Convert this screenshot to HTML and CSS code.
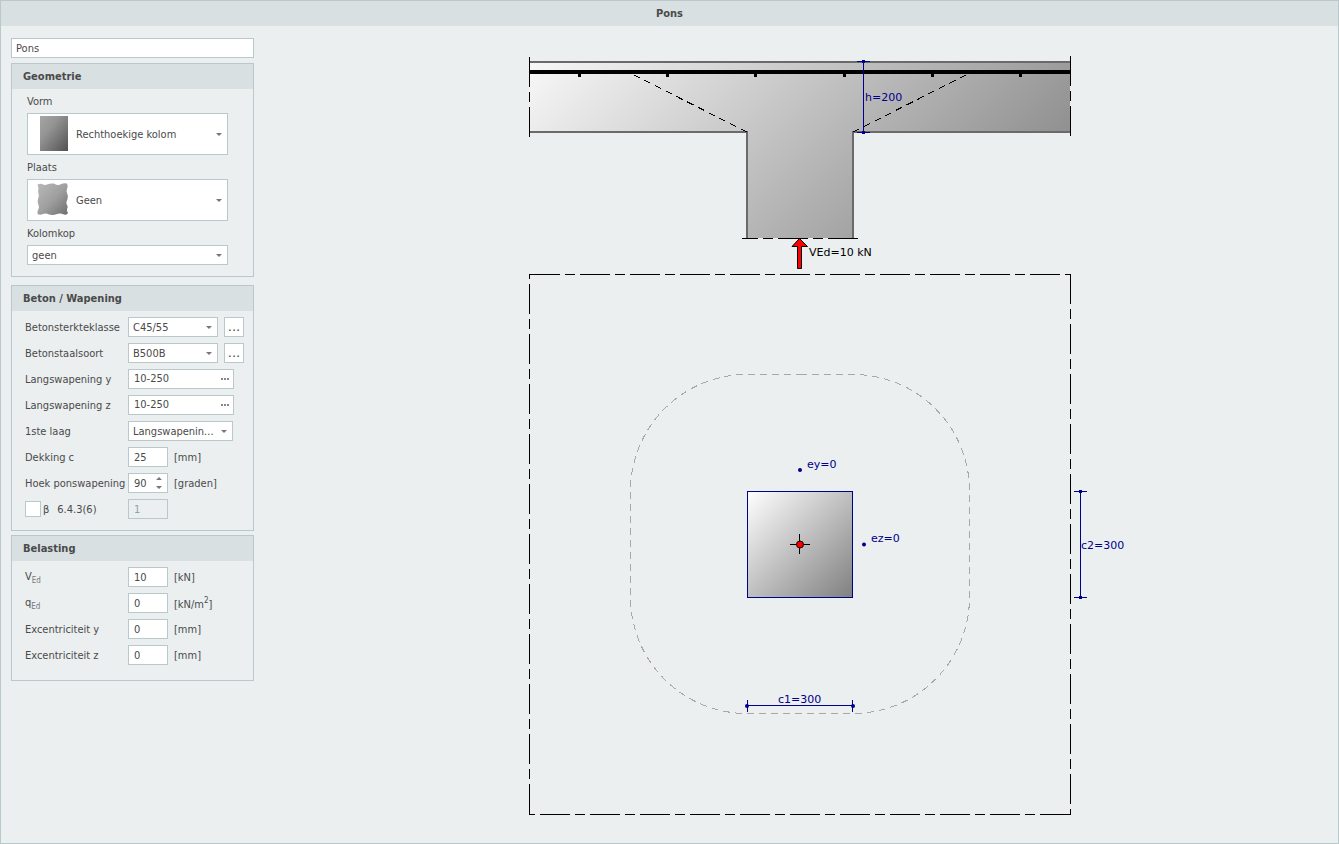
FILE: index.html
```html
<!DOCTYPE html>
<html lang="nl">
<head>
<meta charset="utf-8">
<title>Pons</title>
<link rel="stylesheet" href="styles.css">
</head>
<body>
<svg class="defs" width="0" height="0" aria-hidden="true">
  <symbol id="caret" viewBox="0 0 6 3"><path d="M0 0h6L3 3z"/></symbol>
</svg>
<div class="window">
  <header class="titlebar"><h1 class="title">Pons</h1></header>
  <div class="content">
    <form class="sidebar">
      <input class="field name" type="text" value="Pons" aria-label="Naam">

      <section class="panel geometry">
        <h2 class="panel-title">Geometrie</h2>
        <div class="stack">
          <label class="stack-label" for="vorm">Vorm</label>
          <div class="combo tall">
            <select class="field" id="vorm"><option>Rechthoekige kolom</option></select>
            <svg class="thumb" width="32" height="36" viewBox="0 0 32 36" aria-hidden="true">
              <defs><linearGradient id="g-col" x1="0" y1="0" x2="1" y2="1"><stop offset="0" stop-color="#a6a6a6"/><stop offset=".35" stop-color="#949494"/><stop offset="1" stop-color="#525252"/></linearGradient></defs>
              <rect x="3" y="0" width="28" height="35" fill="url(#g-col)"/>
            </svg>
            <svg class="caret" width="6" height="3"><use href="#caret"/></svg>
          </div>
          <label class="stack-label" for="plaats">Plaats</label>
          <div class="combo tall">
            <select class="field" id="plaats"><option>Geen</option></select>
            <svg class="thumb" width="32" height="36" viewBox="0 0 32 36" aria-hidden="true">
              <defs><linearGradient id="g-plate" x1="0" y1="0" x2="1" y2="1"><stop offset="0" stop-color="#b8b8b8"/><stop offset=".5" stop-color="#a0a0a0"/><stop offset="1" stop-color="#6e6e6e"/></linearGradient></defs>
              <path fill="url(#g-plate)" d="M0.500 3Q2 1 5 2Q8 3.500 10 2.500Q13 1 17 1.500Q20 3.500 22 3Q26 .5 30 1.500Q31.500 4 30 7Q29 9 30 11Q31.500 14 30.500 17Q29 20 29.500 22Q31.500 25 30 27Q29.500 29 31 31Q30 33.500 27 32.500Q23 31 20 32Q16 33.500 12 32.500Q9 31 6 32Q3 33.500 .5 32Q0 29 1.500 27Q2.500 25 1.500 23Q0 20 1 17Q2.500 14 1.500 12Q.5 9 1.500 7Q1.500 5 .5 3z"/>
            </svg>
            <svg class="caret" width="6" height="3"><use href="#caret"/></svg>
          </div>
          <label class="stack-label" for="kop">Kolomkop</label>
          <div class="combo">
            <select class="field" id="kop"><option>geen</option></select>
            <svg class="caret" width="6" height="3"><use href="#caret"/></svg>
          </div>
        </div>
      </section>

      <section class="panel concrete">
        <h2 class="panel-title">Beton / Wapening</h2>
        <div class="rows">
          <div class="row">
            <label for="beton">Betonsterkteklasse</label>
            <div class="combo medium"><select class="field" id="beton"><option>C45/55</option></select><svg class="caret" width="6" height="3"><use href="#caret"/></svg></div>
            <button class="more" type="button">...</button>
          </div>
          <div class="row">
            <label for="staal">Betonstaalsoort</label>
            <div class="combo medium"><select class="field" id="staal"><option>B500B</option></select><svg class="caret" width="6" height="3"><use href="#caret"/></svg></div>
            <button class="more" type="button">...</button>
          </div>
          <div class="row">
            <label for="ly">Langswapening y</label>
            <div class="edit"><input type="text" id="ly" value="10-250"><button class="dots" type="button" aria-label="Bewerk langswapening y"><svg width="8" height="2" viewBox="0 0 8 2"><path d="M0 0h2v2h-2zM3 0h2v2h-2zM6 0h2v2h-2z"/></svg></button></div>
          </div>
          <div class="row">
            <label for="lz">Langswapening z</label>
            <div class="edit"><input type="text" id="lz" value="10-250"><button class="dots" type="button" aria-label="Bewerk langswapening z"><svg width="8" height="2" viewBox="0 0 8 2"><path d="M0 0h2v2h-2zM3 0h2v2h-2zM6 0h2v2h-2z"/></svg></button></div>
          </div>
          <div class="row">
            <label for="laag">1ste laag</label>
            <div class="combo wide"><select class="field" id="laag"><option>Langswapenin...</option></select><svg class="caret" width="6" height="3"><use href="#caret"/></svg></div>
          </div>
          <div class="row">
            <label for="dekking">Dekking c</label>
            <input class="field num" type="text" id="dekking" value="25"><span class="unit">[mm]</span>
          </div>
          <div class="row">
            <label for="hoek">Hoek ponswapening</label>
            <div class="combo spin"><input class="field" type="number" id="hoek" value="90"><svg class="caret" width="6" height="12" viewBox="0 0 6 12"><path d="M0 3h6L3 0zM0 9h6L3 12z"/></svg></div><span class="unit">[graden]</span>
          </div>
          <div class="row">
            <div class="check"><input type="checkbox" id="beta"><label for="beta"><span>β</span><span>6.4.3(6)</span></label></div>
            <input class="field num" type="text" value="1" aria-label="β" disabled>
          </div>
        </div>
      </section>

      <section class="panel load">
        <h2 class="panel-title">Belasting</h2>
        <div class="rows">
          <div class="row"><label for="ved">V<sub>Ed</sub></label><input class="field num" type="text" id="ved" value="10"><span class="unit">[kN]</span></div>
          <div class="row"><label for="qed">q<sub>Ed</sub></label><input class="field num" type="text" id="qed" value="0"><span class="unit">[kN/m<sup>2</sup>]</span></div>
          <div class="row"><label for="ey">Excentriciteit y</label><input class="field num" type="text" id="ey" value="0"><span class="unit">[mm]</span></div>
          <div class="row"><label for="ez">Excentriciteit z</label><input class="field num" type="text" id="ez" value="0"><span class="unit">[mm]</span></div>
        </div>
      </section>
    </form>

    <main class="stage">
      <svg class="drawing" viewBox="254 26 1084 817" role="img" aria-label="Doorsnede en bovenaanzicht">
        <defs>
          <linearGradient id="g-slab" gradientUnits="userSpaceOnUse" x1="529" y1="61" x2="888" y2="420"><stop offset="0" stop-color="#f8f8f8"/><stop offset="1" stop-color="#7e7e7e"/></linearGradient>
          <linearGradient id="g-square" x1="0" y1="0" x2="1" y2="1"><stop offset="0" stop-color="#fff"/><stop offset="1" stop-color="#808080"/></linearGradient>
        </defs>

        <!-- cross-section: slab and column -->
        <path fill="url(#g-slab)" d="M529 62H1070V132H853V238H747V132H529z"/>
        <path class="outline" d="M530 62H1070M530 132H747V238M853 238V132H1070"/>
        <rect x="530" y="70" width="540" height="4"/>
        <path d="M578 74h3v3h-3zM666 74h3v3h-3zM754 74h3v3h-3zM843 74h3v3h-3zM931 74h3v3h-3zM1019 74h3v3h-3z"/>
        <path class="cone" d="M747 132L634 75M853 132L966 75"/>
        <path class="axis" d="M529.500 57V137"/>
        <path class="axis" d="M1070.500 56V136"/>
        <path class="axis" d="M858 238.500H742"/>

        <!-- slab thickness -->
        <path class="dim" d="M863.500 61V132M857 61.500H870M857 132.500H870"/>
        <path class="mark" d="M862 60h3v3h-3zM862 131h3v3h-3z"/>
        <text class="blue" x="865" y="101">h=200</text>

        <!-- column force -->
        <path class="force" d="M799.500 238.500L807.500 246.500H801.500V268.500H797.500V246.500H792z"/>
        <text x="809" y="256">VEd=10 kN</text>

        <!-- plan view -->
        <path class="axis" d="M530 274.500H1071"/>
        <path class="axis" d="M1070.500 274V815"/>
        <path class="axis" d="M1070 814.500H529"/>
        <path class="axis" d="M529.500 814V274"/>
        <path class="perimeter" d="M800 374.500H853A116.500 116.500 0 0 1 969.500 491V597A116.500 116.500 0 0 1 853 713.500H747A116.500 116.500 0 0 1 630.500 597V491A116.500 116.500 0 0 1 747 374.500H800"/>
        <rect class="column" x="747.500" y="491.500" width="105" height="106"/>
        <path class="line" d="M790 544.500H810M799.500 534V554"/>
        <circle class="load-point" cx="800" cy="544.500" r="3.500"/>

        <circle class="mark" cx="800" cy="470" r="2"/>
        <text class="blue" x="807" y="468">ey=0</text>
        <circle class="mark" cx="864" cy="544.500" r="2"/>
        <text class="blue" x="871" y="542">ez=0</text>

        <path class="dim" d="M747 705.500H853M747.500 700V712M852.500 700V712"/>
        <circle class="mark" cx="747" cy="706" r="2"/>
        <circle class="mark" cx="853" cy="706" r="2"/>
        <text class="blue" x="778" y="703">c1=300</text>

        <path class="dim" d="M1080.500 491V597M1074 491.500H1087M1074 597.500H1087"/>
        <path class="mark" d="M1079 490h3v3h-3zM1079 596h3v3h-3z"/>
        <text class="blue" x="1081" y="549">c2=300</text>
      </svg>
    </main>
  </div>
</div>
</body>
</html>
```
FILE: styles.css
```css
:root {
  --line: #b9c8ca;
  --bar: #d8e0e1;
  --page: #ebeff0;
  --ink: #4a4a4a;
  --dim: #00008b;
}

* { box-sizing: border-box; }

body {
  margin: 0;
  background: var(--page);
  color: var(--ink);
  font: 11px/14px "DejaVu Sans Condensed", "DejaVu Sans", sans-serif;
}

input, select, button { font: inherit; color: inherit; margin: 0; }

.defs { position: absolute; }

.window {
  min-height: 100vh;
  display: flex;
  flex-direction: column;
  border: 1px solid var(--line);
}

.titlebar {
  height: 25px;
  display: grid;
  place-items: center;
  background: var(--bar);
}

.title, .panel-title { margin: 0; font-size: 11px; font-weight: bold; }

.content { flex: 1; display: flex; }

.sidebar {
  width: 253px;
  flex: none;
  padding: 12px 0 12px 10px;
}

.field, .edit {
  width: 100%;
  height: 20px;
  padding: 0 5px;
  border: 1px solid var(--line);
  border-radius: 0;
  background: #fff;
  appearance: none;
}

select.field { padding: 1px 4px 0; }

.field.name { display: block; padding: 0 4px; margin-bottom: 5px; }

.field:disabled { background: var(--page); color: #8fa0ab; opacity: 1; }

.panel { border: 1px solid var(--line); }
.geometry { margin-bottom: 8px; }
.concrete { margin-bottom: 4px; }

.panel-title {
  height: 25px;
  padding: 0 11px;
  display: flex;
  align-items: center;
  background: var(--bar);
}

.stack { padding: 0 25px 11px 15px; display: grid; }
.stack-label { height: 24px; padding-top: 2px; display: flex; align-items: center; }

.combo { display: grid; align-items: center; }
.combo > * { grid-area: 1 / 1; }
.combo.tall .field { height: 42px; padding-left: 48px; }
.combo.medium { width: 90px; }
.combo.wide { width: 105px; }
.combo.spin { width: 40px; }

.thumb { margin-left: 10px; pointer-events: none; }

.caret {
  justify-self: end;
  margin-right: 6px;
  fill: #777;
  pointer-events: none;
}

.spin .field { appearance: textfield; }
.spin .field::-webkit-inner-spin-button { display: none; }

.rows {
  padding: 6px 9px 11px 13px;
  display: flex;
  flex-direction: column;
  gap: 6px;
}

.load .rows { padding-bottom: 15px; }

.row { height: 20px; display: flex; align-items: center; gap: 6px; white-space: nowrap; }
.row > :first-child { width: 97px; flex: none; }
.row label, .unit { padding-top: 2px; }

.num { width: 40px; }

.more {
  width: 20px;
  height: 20px;
  padding: 0;
  border: 1px solid var(--line);
  background: #fff;
  font: 13px/14px "DejaVu Sans", sans-serif;
}

.edit { width: 106px; display: flex; align-items: center; padding-right: 4px; }
.edit input { flex: 1; min-width: 0; padding: 0; border: 0; background: none; }
.dots { display: flex; padding: 0; border: 0; background: none; fill: #888; }

.check { display: flex; align-items: center; gap: 2px; }
.check label { display: flex; gap: 8px; }
.check input {
  width: 16px;
  height: 16px;
  appearance: none;
  border: 1px solid var(--line);
  background: #fff;
}
.check input:checked { background: var(--ink); }

sub, sup { font-size: 8px; line-height: 1; }
sub { color: #777; }

.stage { flex: 1; min-width: 0; display: flex; }
.drawing { width: 100%; }
.drawing text { font: 11px "DejaVu Sans", sans-serif; }
.drawing .blue, .mark { fill: var(--dim); }
.drawing text, .mark, .drawing rect { stroke: none; }

.outline { fill: none; stroke: #6a6a6a; stroke-width: 2px; }
.cone { fill: none; stroke: #000; stroke-dasharray: 7 5; shape-rendering: crispEdges; }
.axis { fill: none; stroke: #000; stroke-dasharray: 30 5 10 5; }
.line { fill: none; stroke: #000; }
.dim { fill: none; stroke: var(--dim); }
.perimeter { fill: none; stroke: #a8a8a8; stroke-dasharray: 7 5; shape-rendering: crispEdges; }
.force, .load-point { fill: #f00; stroke: #000; }
.drawing .column { fill: url(#g-square); stroke: var(--dim); }
```
